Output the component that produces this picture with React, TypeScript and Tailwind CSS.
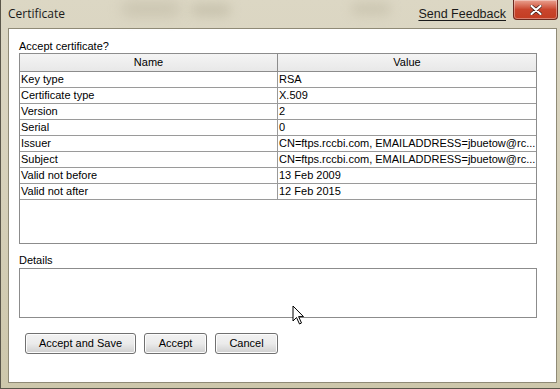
import React from "react";

const rows: [string, string][] = [
  ["Key type", "RSA"],
  ["Certificate type", "X.509"],
  ["Version", "2"],
  ["Serial", "0"],
  ["Issuer", "CN=ftps.rccbi.com, EMAILADDRESS=jbuetow@rc..."],
  ["Subject", "CN=ftps.rccbi.com, EMAILADDRESS=jbuetow@rc..."],
  ["Valid not before", "13 Feb 2009"],
  ["Valid not after", "12 Feb 2015"],
];

function DialogButton({ label, width }: { label: string; width: string }) {
  return (
    <button
      className={`${width} h-[21px] rounded-[3px] border border-[#707070] bg-gradient-to-b from-[#f2f2f2] via-[#ebebeb] to-[#cfcfcf] text-[11px] text-black shadow-[inset_0_0_0_1px_#fcfcfc]`}
    >
      {label}
    </button>
  );
}

export default function App() {
  return (
    <div
      className="relative w-[560px] h-[389px] overflow-hidden bg-gradient-to-b from-[#dcd7c4] via-[#d6d0b9] to-[#cdc7ab] border-l border-b border-[#5a564a] text-black"
      style={{ fontFamily: '"Liberation Sans", Arial, sans-serif' }}
    >
      {/* blurred glass behind the title bar */}
      <div className="absolute left-[120px] top-[2px] w-[60px] h-[14px] rounded-full bg-[#b8b29c] blur-[7px] opacity-50" />
      <div className="absolute left-[190px] top-[4px] w-[40px] h-[12px] rounded-full bg-[#a9a38c] blur-[6px] opacity-40" />
      <div className="absolute left-[350px] top-[3px] w-[40px] h-[12px] rounded-full bg-[#b3ad96] blur-[6px] opacity-40" />

      {/* Title bar */}
      <div className="relative flex h-[28px] items-center pl-[7px] pr-[54px]">
        <span className="text-[12px] text-[#1a1a1a]" style={{ fontFamily: '"Open Sans", "Noto Sans", sans-serif' }}>
          Certificate
        </span>
        <span className="ml-auto mt-[1px] text-[12.5px] text-[#1a1a1a] underline underline-offset-2">Send Feedback</span>
      </div>

      {/* Close button */}
      <div className="absolute left-[512px] top-0 flex h-[20px] w-[45px] items-center justify-center rounded-b-[4px] border border-t-0 border-[#6b2a20] bg-gradient-to-b from-[#e9a190] via-[#c9452d] to-[#c33d22] shadow-[inset_0_0_0_1px_rgba(255,255,255,0.35)]">
        <svg width="12" height="10" viewBox="0 0 12 10">
          <path d="M1.5 1 L10.5 9 M10.5 1 L1.5 9" stroke="#3b1a14" strokeWidth="3.4" strokeLinecap="round" />
          <path d="M1.5 1 L10.5 9 M10.5 1 L1.5 9" stroke="#ffffff" strokeWidth="2.2" strokeLinecap="round" />
        </svg>
      </div>

      {/* Client area */}
      <div className="ml-[7px] h-[355px] w-[549px] border border-[#8f8a76] bg-white">
        <div className="pl-[10px] pt-[10px] text-[11px]">
          <div className="h-[14px] leading-[14px]">Accept certificate?</div>

          {/* Table */}
          <div className="h-[191px] w-[518px] border border-[#8c8c8c]">
            <div className="flex h-[18px] border-b border-[#8c8c8c] bg-gradient-to-b from-[#f4f4f4] to-[#e8e8e8]">
              <div className="flex w-[258px] items-center justify-center border-r border-[#8c8c8c]">Name</div>
              <div className="flex flex-1 items-center justify-center">Value</div>
            </div>
            {rows.map(([name, value]) => (
              <div key={name} className="flex h-[16px] border-b border-[#9a9a9a]">
                <div className="w-[258px] border-r border-[#9a9a9a] pl-[1px] leading-[15px]">{name}</div>
                <div className="flex-1 pl-[1px] leading-[15px] whitespace-nowrap">{value}</div>
              </div>
            ))}
          </div>

          <div className="mt-[9px] h-[15px] leading-[15px]">Details</div>
          <div className="h-[50px] w-[518px] border border-[#8c8c8c]" />

          <div className="mt-[15px] flex gap-[8px] pl-[6px]">
            <DialogButton label="Accept and Save" width="w-[111px]" />
            <DialogButton label="Accept" width="w-[63px]" />
            <DialogButton label="Cancel" width="w-[63px]" />
          </div>
        </div>
      </div>

      {/* Mouse pointer */}
      <svg className="absolute left-[291px] top-[305px]" width="14" height="21" viewBox="0 0 14 21">
        <path
          d="M1 1 L1 16 L4.5 12.5 L7.5 19 L9.5 18 L6.6 11.6 L11.5 11.6 Z"
          fill="#ffffff"
          stroke="#000000"
          strokeWidth="1"
          strokeLinejoin="round"
        />
      </svg>
    </div>
  );
}
